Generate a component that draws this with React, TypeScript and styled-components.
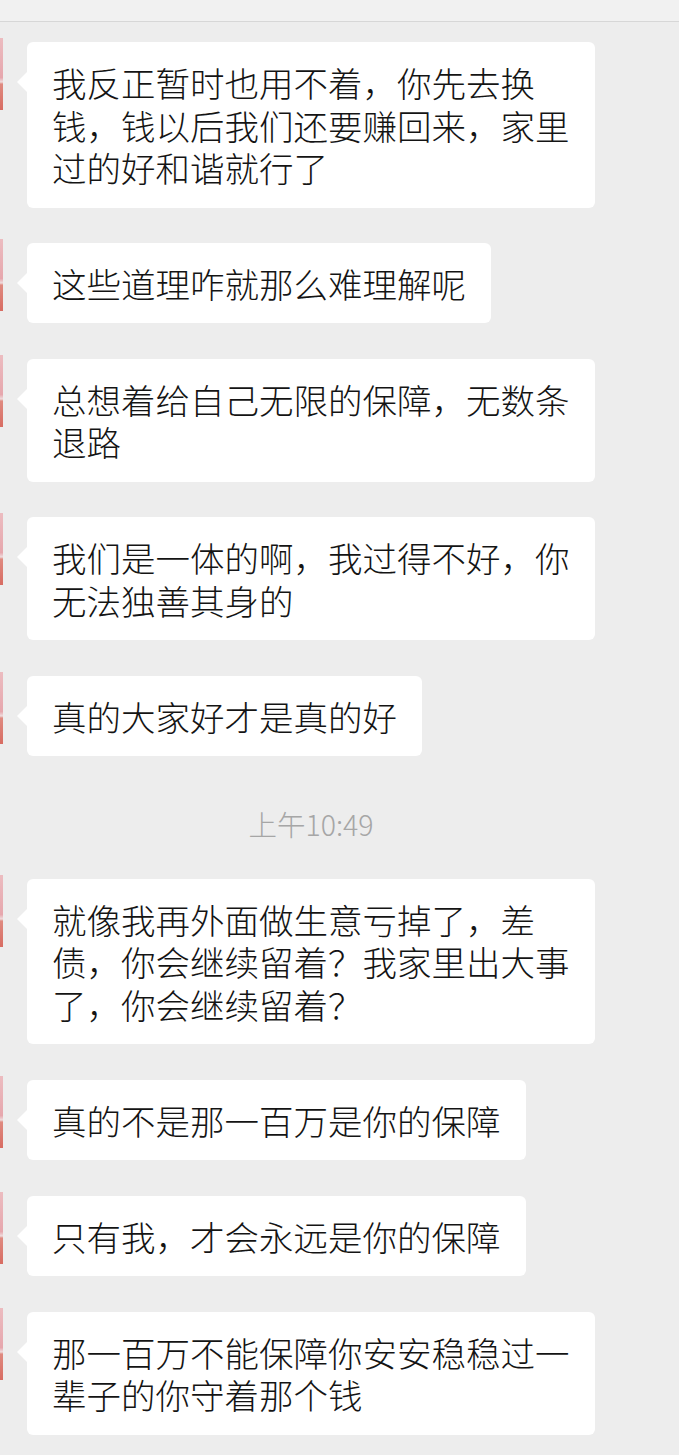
import React from "react";
import styled, { createGlobalStyle } from "styled-components";

const GlobalStyle = createGlobalStyle`
  html, body {
    margin: 0;
    padding: 0;
    background: #ededed;
  }
  body {
    font-family: "Noto Sans CJK SC", "Noto Sans", sans-serif;
    -webkit-font-smoothing: antialiased;
  }
`;

const Page = styled.div`
  width: 679px;
  min-height: 1455px;
  background: #ededed;
  overflow: hidden;
`;

const TopBar = styled.div`
  height: 21px;
  background: #f1f1f1;
  border-bottom: 1px solid #d7d7d7;
`;

const List = styled.div`
  display: flex;
  flex-direction: column;
  gap: 35.4px;
  padding-top: 20px;
`;

const Row = styled.div`
  display: flex;
  align-items: flex-start;
  gap: 24px;
`;

const Avatar = styled.div`
  flex: none;
  width: 3px;
  height: 72px;
  margin-top: -4px;
  background: linear-gradient(
    to bottom,
    #ecbcc0 0%,
    #e6a7ad 55%,
    #efdcdd 61%,
    #df8a80 64%,
    #d86c62 100%
  );
`;

const Bubble = styled.div`
  position: relative;
  max-width: 568px;
  box-sizing: border-box;
  padding: 19px 25px;
  background: #ffffff;
  border-radius: 6px;
  color: #141414;
  font-size: 34.5px;
  line-height: 42.5px;
  font-weight: 300;
  word-break: break-all;

  &::before {
    content: "";
    position: absolute;
    left: -10px;
    top: 30px;
    width: 0;
    height: 0;
    border-top: 10px solid transparent;
    border-bottom: 10px solid transparent;
    border-right: 10px solid #ffffff;
  }
`;

const TimeRow = styled.div`
  padding: 14px 57px 0 0;
  text-align: center;
  font-family: "Noto Sans CJK SC", "Noto Sans", sans-serif;
  font-size: 28.5px;
  font-weight: 300;
  line-height: 38px;
  color: #a6a6a6;
`;

type Item = { kind: "msg"; text: string } | { kind: "time"; text: string };

const items: Item[] = [
  { kind: "msg", text: "我反正暂时也用不着，你先去换钱，钱以后我们还要赚回来，家里过的好和谐就行了" },
  { kind: "msg", text: "这些道理咋就那么难理解呢" },
  { kind: "msg", text: "总想着给自己无限的保障，无数条退路" },
  { kind: "msg", text: "我们是一体的啊，我过得不好，你无法独善其身的" },
  { kind: "msg", text: "真的大家好才是真的好" },
  { kind: "time", text: "上午10:49" },
  { kind: "msg", text: "就像我再外面做生意亏掉了，差债，你会继续留着？我家里出大事了，你会继续留着？" },
  { kind: "msg", text: "真的不是那一百万是你的保障" },
  { kind: "msg", text: "只有我，才会永远是你的保障" },
  { kind: "msg", text: "那一百万不能保障你安安稳稳过一辈子的你守着那个钱" },
];

export default function App() {
  return (
    <Page>
      <GlobalStyle />
      <TopBar />
      <List>
        {items.map((it, i) =>
          it.kind === "time" ? (
            <TimeRow key={i}>{it.text}</TimeRow>
          ) : (
            <Row key={i}>
              <Avatar />
              <Bubble>{it.text}</Bubble>
            </Row>
          )
        )}
      </List>
    </Page>
  );
}
